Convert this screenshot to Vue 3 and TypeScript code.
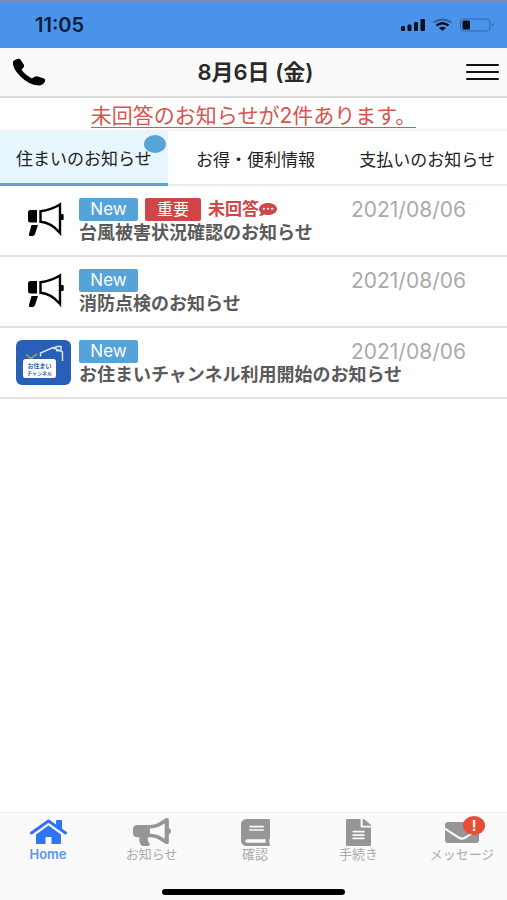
<script setup lang="ts">
import { ref } from 'vue'

interface Notice {
  title: string
  date: string
  important?: boolean
  unanswered?: boolean
  channel?: boolean
}

interface NavItem {
  label: string
  icon: 'home' | 'news' | 'book' | 'file' | 'mail'
  alert?: boolean
}

const tabs: string[] = ['住まいのお知らせ', 'お得・便利情報', '支払いのお知らせ']
const activeTab = ref(0)

const notices: Notice[] = [
  { title: '台風被害状況確認のお知らせ', date: '2021/08/06', important: true, unanswered: true },
  { title: '消防点検のお知らせ', date: '2021/08/06' },
  { title: 'お住まいチャンネル利用開始のお知らせ', date: '2021/08/06', channel: true },
]

const navItems: NavItem[] = [
  { label: 'Home', icon: 'home' },
  { label: 'お知らせ', icon: 'news' },
  { label: '確認', icon: 'book' },
  { label: '手続き', icon: 'file' },
  { label: 'メッセージ', icon: 'mail', alert: true },
]
</script>

<template>
  <div class="screen">
    <div class="status">
      <span class="clock">11:05</span>
      <svg class="status-icons" viewBox="0 0 94 14" aria-hidden="true">
        <rect x="0" y="8" width="4" height="5" rx="1.2" />
        <rect x="6.500" y="6.500" width="4" height="6.500" rx="1.2" />
        <rect x="13" y="4" width="4" height="9" rx="1.2" />
        <rect x="19.500" y="1" width="4.500" height="12" rx="1.2" />
        <path d="M32.500 4.500Q41.500-1.500 50.500 4.500" fill="none" stroke="#2c5f9e" stroke-width="1.800" />
        <path d="M35.500 7.500Q41.500 3 47.500 7.500" fill="none" stroke="#06101c" stroke-width="2.400" />
        <path d="M38 10Q41.500 7.500 45 10L41.500 12.800Z" />
        <rect x="59.500" y="1" width="29.500" height="12" rx="3" fill="none" stroke="#2f68ad" />
        <rect x="61.500" y="2.500" width="7.500" height="9" rx="1.500" />
        <path d="M91 5Q93.500 7 91 9Z" fill="#2f68ad" />
      </svg>
    </div>

    <header class="header">
      <button class="icon-button phone" type="button" aria-label="電話">
        <svg viewBox="0 0 34 28" width="34" height="28">
          <path d="M1 3.500Q4 .5 7 .8Q8.500 1 9.500 3L12 7Q12.500 9 10.500 10.500L9.500 11.500Q12 16 20 20.500L22 19Q24 17.800 26 18.600L32 20.500Q34 21.500 33 23.500Q31 27.500 26.500 27.500Q17 27 8.500 18.500Q0 10 1 3.500Z" />
        </svg>
      </button>
      <h1>8月6日 (金)</h1>
      <button class="icon-button menu" type="button" aria-label="メニュー">
        <span></span><span></span><span></span>
      </button>
    </header>

    <div class="reminder"><a href="#unanswered">未回答のお知らせが2件あります。</a></div>

    <div class="tabs" role="tablist">
      <button
        v-for="(tab, i) in tabs"
        :key="tab"
        class="tab"
        :class="{ active: i === activeTab }"
        type="button"
        role="tab"
        :aria-selected="i === activeTab"
        @click="activeTab = i"
      >
        {{ tab }}<i v-if="i === 0" class="dot"></i>
      </button>
    </div>

    <main>
      <ul class="list">
        <li v-for="n in notices" :key="n.title">
          <a class="row" href="#notice">
            <span class="thumb">
              <svg v-if="n.channel" viewBox="0 0 55 45" width="55" height="45">
                <rect width="55" height="45" rx="6" fill="#2a5fb8" />
                <path d="M24.500 16.500V13L37 7.500L46.500 12V21M37 8.500L41 6.500H45V11L40 10.500" fill="none" stroke="#dbe8fb" stroke-width="1.400" />
                <path d="M10 14.500L15 18.500L21 14" fill="none" stroke="#a89860" stroke-width="1.600" />
                <rect x="7" y="19" width="33" height="19" rx="2.500" fill="#fff" />
                <text x="23.500" y="27.500" text-anchor="middle">お住まい</text>
                <text class="small" x="23.500" y="34.500" text-anchor="middle">チャンネル</text>
              </svg>
              <svg v-else class="megaphone" viewBox="0 0 37 35" width="37" height="35">
                <path d="M3.500 8H10V20.500H3.500Q1 20.500 1 18V10.500Q1 8 3.500 8Z" />
                <path d="M4.500 23H11L8 32Q7.500 34 5.500 34H3Q1.500 34 2 32Z" />
                <path d="M13.500 9.200Q24 8 33 2.500V31Q24 20.500 13.500 19.800Z" fill="none" stroke="#000" stroke-width="2.400" />
                <rect x="33.500" y="12" width="3.200" height="6" rx="1" />
              </svg>
            </span>
            <span class="body">
              <span class="meta">
                <span class="badge new">New</span>
                <span v-if="n.important" class="badge important">重要</span>
                <span v-if="n.unanswered" class="unanswered">
                  未回答
                  <svg viewBox="0 32 512 448" width="18" height="13" preserveAspectRatio="none" aria-hidden="true">
                    <path d="M256 32C114.600 32 0 125.100 0 240c0 49.600 21.400 95 57 130.700C44.500 421.100 2.700 466 2.200 466.500c-2.200 2.300-2.800 5.700-1.500 8.700S4.800 480 8 480c66.300 0 116-31.800 140.600-51.400 32.700 12.300 69 19.400 107.400 19.400 141.400 0 256-93.100 256-208S397.400 32 256 32z" fill="currentColor" />
                    <g fill="#fff"><circle cx="138" cy="232" r="34" /><circle cx="256" cy="232" r="34" /><circle cx="374" cy="232" r="34" /></g>
                  </svg>
                </span>
                <time>{{ n.date }}</time>
              </span>
              <span class="title">{{ n.title }}</span>
            </span>
          </a>
        </li>
      </ul>
    </main>

    <footer>
      <nav class="nav">
        <a v-for="item in navItems" :key="item.label" href="#nav" :class="{ current: item.icon === 'home' }">
          <span class="nav-icon">
            <svg v-if="item.icon === 'home'" viewBox="0 0 37 26" width="37" height="26">
              <path d="M1.500 14L18.500 2L35.500 14" fill="none" stroke="currentColor" stroke-width="3" stroke-linecap="round" stroke-linejoin="round" />
              <path d="M26 1.500Q26 1 27 1H31Q32 1 32 2V11L26 7Z" />
              <path d="M18.500 6.500L31 15.500V24Q31 25 30 25H21.500V18H15.500V25H7Q6 25 6 24V15.500Z" />
            </svg>
            <svg v-else-if="item.icon === 'news'" viewBox="0 0 576 512" width="38" height="28" preserveAspectRatio="none">
              <path d="M576 240c0-23.630-12.950-44.040-32-55.120V32.010C544 23.260 537.020 0 512 0c-7.120 0-14.190 2.380-19.980 7.020l-85.030 68.030C364.280 109.190 310.660 128 256 128H64c-35.350 0-64 28.650-64 64v96c0 35.350 28.650 64 64 64h33.700c-1.390 10.480-2.180 21.140-2.180 32 0 39.770 9.260 77.350 25.560 110.940 5.190 10.690 16.520 17.060 28.400 17.060h74.280c26.050 0 41.690-29.840 25.900-50.560-16.400-21.520-26.150-48.360-26.150-77.440 0-11.110 1.620-21.790 4.410-32H256c54.660 0 108.280 18.810 150.980 52.950l85.030 68.030a32.023 32.023 0 0 0 19.980 7.020c24.920 0 32-22.780 32-32V295.130C563.050 284.040 576 263.630 576 240zm-96 141.420l-33.050-26.440C392.950 311.780 325.120 288 256 288v-96c69.120 0 136.950-23.780 190.950-66.980L480 98.580v282.840z" />
            </svg>
            <svg v-else-if="item.icon === 'book'" viewBox="0 0 448 512" width="29" height="27" preserveAspectRatio="none">
              <path d="M448 360V24c0-13.300-10.700-24-24-24H96C43 0 0 43 0 96v320c0 53 43 96 96 96h328c13.300 0 24-10.700 24-24v-16c0-7.500-3.500-14.300-8.900-18.700-4.200-15.400-4.200-59.300 0-74.700 5.400-4.300 8.900-11.100 8.900-18.600zM128 134c0-3.300 2.700-6 6-6h212c3.300 0 6 2.700 6 6v20c0 3.300-2.700 6-6 6H134c-3.300 0-6-2.700-6-6v-20zm0 64c0-3.300 2.700-6 6-6h212c3.300 0 6 2.700 6 6v20c0 3.300-2.700 6-6 6H134c-3.300 0-6-2.700-6-6v-20zm253.400 250H96c-17.700 0-32-14.300-32-32 0-17.600 14.400-32 32-32h285.400c-1.900 17.100-1.900 46.900 0 64z" />
            </svg>
            <svg v-else-if="item.icon === 'file'" viewBox="0 0 384 512" width="25" height="27" preserveAspectRatio="none">
              <path d="M224 136V0H24C10.700 0 0 10.700 0 24v464c0 13.300 10.700 24 24 24h336c13.300 0 24-10.700 24-24V160H248c-13.200 0-24-10.800-24-24zm64 236c0 6.600-5.400 12-12 12H108c-6.600 0-12-5.400-12-12v-8c0-6.600 5.400-12 12-12h168c6.600 0 12 5.400 12 12v8zm0-64c0 6.600-5.400 12-12 12H108c-6.600 0-12-5.400-12-12v-8c0-6.600 5.400-12 12-12h168c6.600 0 12 5.400 12 12v8zm0-72v8c0 6.600-5.400 12-12 12H108c-6.600 0-12-5.400-12-12v-8c0-6.600 5.400-12 12-12h168c6.600 0 12 5.400 12 12zm96-114.100v6.100H256V0h6.100c6.400 0 12.500 2.500 17 7l97.900 98c4.500 4.500 7 10.600 7 16.900z" />
            </svg>
            <svg v-else viewBox="0 0 34 21" width="34" height="21">
              <path d="M3 0H31Q34 0 34 3V6L20 14.500Q17 16.500 14 14.500L0 5.500V3Q0 0 3 0Z" />
              <path d="M0 8L13 16.500Q17 19 21 16.500L34 8V18Q34 21 31 21H3Q0 21 0 18Z" />
            </svg>
            <b v-if="item.alert" class="alert">!</b>
          </span>
          <span class="nav-label">{{ item.label }}</span>
        </a>
      </nav>
      <div class="home-bar"></div>
    </footer>
  </div>
</template>

<style>
body {
  margin: 0;
  background: #fff;
}
</style>

<style scoped>
* {
  box-sizing: border-box;
}
.screen {
  display: flex;
  flex-direction: column;
  min-height: 100vh;
  font-family: Inter, "Noto Sans CJK JP", sans-serif;
  color: #333;
}
svg {
  display: block;
}
button {
  border: 0;
  padding: 0;
  background: none;
  font: inherit;
  color: inherit;
}
a {
  color: inherit;
  text-decoration: none;
}
.status {
  display: flex;
  align-items: center;
  justify-content: space-between;
  height: 48px;
  padding: 0 12px 0 35px;
  background: #4a92ea;
  border-top: 1px solid #7f8f9f;
}
.clock {
  font-size: 20px;
  font-weight: 600;
  color: #0a1c33;
}
.status-icons {
  width: 94px;
  height: 14px;
  fill: #06101c;
}
.header {
  display: grid;
  grid-template-columns: 1fr auto 1fr;
  align-items: center;
  height: 50px;
  padding: 0 8px 0 12px;
  background: #fafafa;
  border-bottom: 2px solid #dcdcdc;
}
h1 {
  margin: 0;
  font-size: 22px;
  font-weight: 600;
  line-height: 24px;
  color: #2a2a2a;
}
.icon-button.menu {
  display: flex;
  flex-direction: column;
  justify-self: end;
  gap: 5px;
  width: 33px;
}
.menu span {
  height: 2px;
  border-radius: 1px;
  background: #111;
}
.reminder {
  display: flex;
  justify-content: center;
  height: 33px;
  padding-top: 5px;
  border-bottom: 2px solid #f5f5f5;
}
.reminder a {
  height: 25px;
  font-size: 21px;
  line-height: 26px;
  color: #d9534f;
  border-bottom: 1px solid #d9534f;
}
.tabs {
  display: flex;
  height: 55px;
  border-bottom: 2px solid #ececec;
}
.tab {
  position: relative;
  margin-bottom: -2px;
  padding: 0 16px;
  font-size: 17px;
  font-weight: 400;
  white-space: nowrap;
  color: #222;
}
.tab:nth-child(2) {
  flex: 1;
  padding: 0 16px 0 8px;
}
.tab:last-child {
  padding: 0 12px 0 8px;
}
.tab.active {
  background: #e8f7ff;
  border-bottom: 3px solid #58a3d8;
}
.dot {
  position: absolute;
  top: 4px;
  right: 2px;
  width: 22px;
  height: 18px;
  border-radius: 50%;
  background: #58a3d8;
}
.list {
  margin: 0;
  padding: 0;
  list-style: none;
}
.row {
  display: flex;
  gap: 8px;
  height: 71px;
  padding: 12px 16px 0;
  border-bottom: 2px solid #e2e2e2;
}
.thumb {
  flex: none;
  width: 55px;
}
.thumb text {
  font-size: 6px;
  font-weight: 700;
  fill: #2a5fb8;
}
.thumb text.small {
  font-size: 5px;
}
.megaphone {
  margin: 4px 0 0 11px;
}
.body {
  display: flex;
  flex: 1;
  flex-direction: column;
}
.meta {
  display: flex;
  align-items: center;
  gap: 7px;
  height: 23px;
  padding-right: 25px;
}
.badge {
  border-radius: 2px;
  font-size: 17px;
  line-height: 23px;
  text-align: center;
  color: #fff;
}
.new {
  width: 59px;
  background: #55a3d8;
}
.important {
  width: 56px;
  font-size: 16px;
  background: #d04545;
}
.unanswered {
  display: flex;
  align-items: center;
  font-size: 17px;
  font-weight: 700;
  line-height: 23px;
  color: #d04545;
}
time {
  margin-left: auto;
  font-size: 21px;
  line-height: 21px;
  color: #aaa;
}
.title {
  font-size: 18px;
  font-weight: 700;
  line-height: 24px;
  color: #5a5a5a;
}
footer {
  display: flex;
  flex-direction: column;
  justify-content: space-between;
  height: 88px;
  margin-top: auto;
  padding-bottom: 5px;
  background: #fafafa;
  border-top: 1px solid #f0f0f0;
}
.nav {
  display: flex;
  justify-content: space-between;
  padding: 5px 12px 0 15px;
}
.nav a {
  display: flex;
  flex-direction: column;
  align-items: center;
  width: 66px;
  white-space: nowrap;
  color: #969696;
}
.nav svg {
  fill: currentColor;
}
.nav .current {
  color: #2f74f5;
}
.nav-icon {
  position: relative;
  display: flex;
  align-items: center;
  height: 28px;
}
.nav-label {
  font-size: 13px;
  line-height: 16px;
  color: #aaa;
}
.current .nav-label {
  font-weight: 600;
  color: #5b92f7;
}
.alert {
  position: absolute;
  top: -2px;
  right: -6px;
  width: 22px;
  height: 19px;
  border-radius: 50%;
  background: #e94b35;
  font-size: 14px;
  line-height: 19px;
  text-align: center;
  color: #fff;
}
.home-bar {
  align-self: center;
  width: 36%;
  height: 6px;
  border-radius: 3px;
  background: #000;
}
</style>
